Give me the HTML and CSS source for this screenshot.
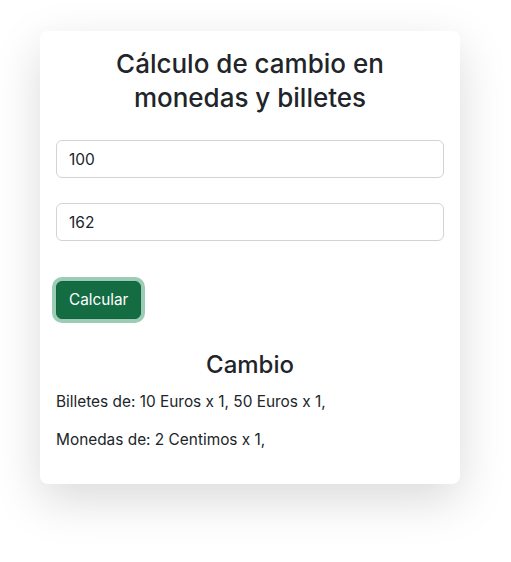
FILE: index.html
```html
<!DOCTYPE html>
<html lang="es">
<head>
<meta charset="utf-8">
<title>Cálculo de cambio</title>
<link rel="stylesheet" href="styles.css">
</head>
<body>
<div class="page">
  <div class="card">
    <h3 class="title">Cálculo de cambio en monedas y billetes</h3>
    <form class="form">
      <input class="field" type="text" value="100">
      <input class="field" type="text" value="162">
      <button class="btn" type="button">Calcular</button>
    </form>
    <h4 class="subtitle">Cambio</h4>
    <p class="line">Billetes de: 10 Euros x 1, 50 Euros x 1,</p>
    <p class="line">Monedas de: 2 Centimos x 1,</p>
  </div>
</div>
</body>
</html>
```

FILE: styles.css
```css
* { box-sizing: border-box; }
html, body { margin: 0; padding: 0; background: #fff; }
body {
  font-family: Inter, "Noto Sans", "Liberation Sans", sans-serif;
  color: #212529;
  font-size: 16px;
  line-height: 1.5;
}
.page {
  padding: 31px 0 70px 40px;
}
.card {
  width: 420px;
  background: #fff;
  border-radius: 8px;
  box-shadow: 0 16px 48px rgba(0,0,0,0.15);
  padding: 16px;
}
.title {
  margin: 0 0 25px;
  font-size: 26px;
  font-weight: 500;
  line-height: 34px;
  text-align: center;
}
.form {
  display: flex;
  flex-direction: column;
  align-items: flex-start;
}
.field {
  display: block;
  width: 100%;
  height: 38px;
  padding: 6px 12px;
  font: inherit;
  font-size: 15.5px;
  color: #212529;
  border: 1px solid #ced4da;
  border-radius: 6px;
  background: #fff;
  margin-bottom: 25px;
}
.field:last-of-type { margin-bottom: 40px; }
.btn {
  font: inherit;
  font-size: 15.3px;
  height: 38px;
  padding: 0 12px;
  color: #fff;
  background: #146c43;
  border: 1px solid #13653f;
  border-radius: 6px;
  box-shadow: 0 0 0 4px rgba(60,153,110,0.5);
  cursor: pointer;
}
.subtitle {
  margin: 32px 0 10px;
  font-size: 24px;
  font-weight: 500;
  line-height: 1.2;
  text-align: center;
}
.line {
  margin: 0 0 14px;
  font-size: 15.4px;
  line-height: 24px;
}
.line:last-child { margin-bottom: 16px; }
```
